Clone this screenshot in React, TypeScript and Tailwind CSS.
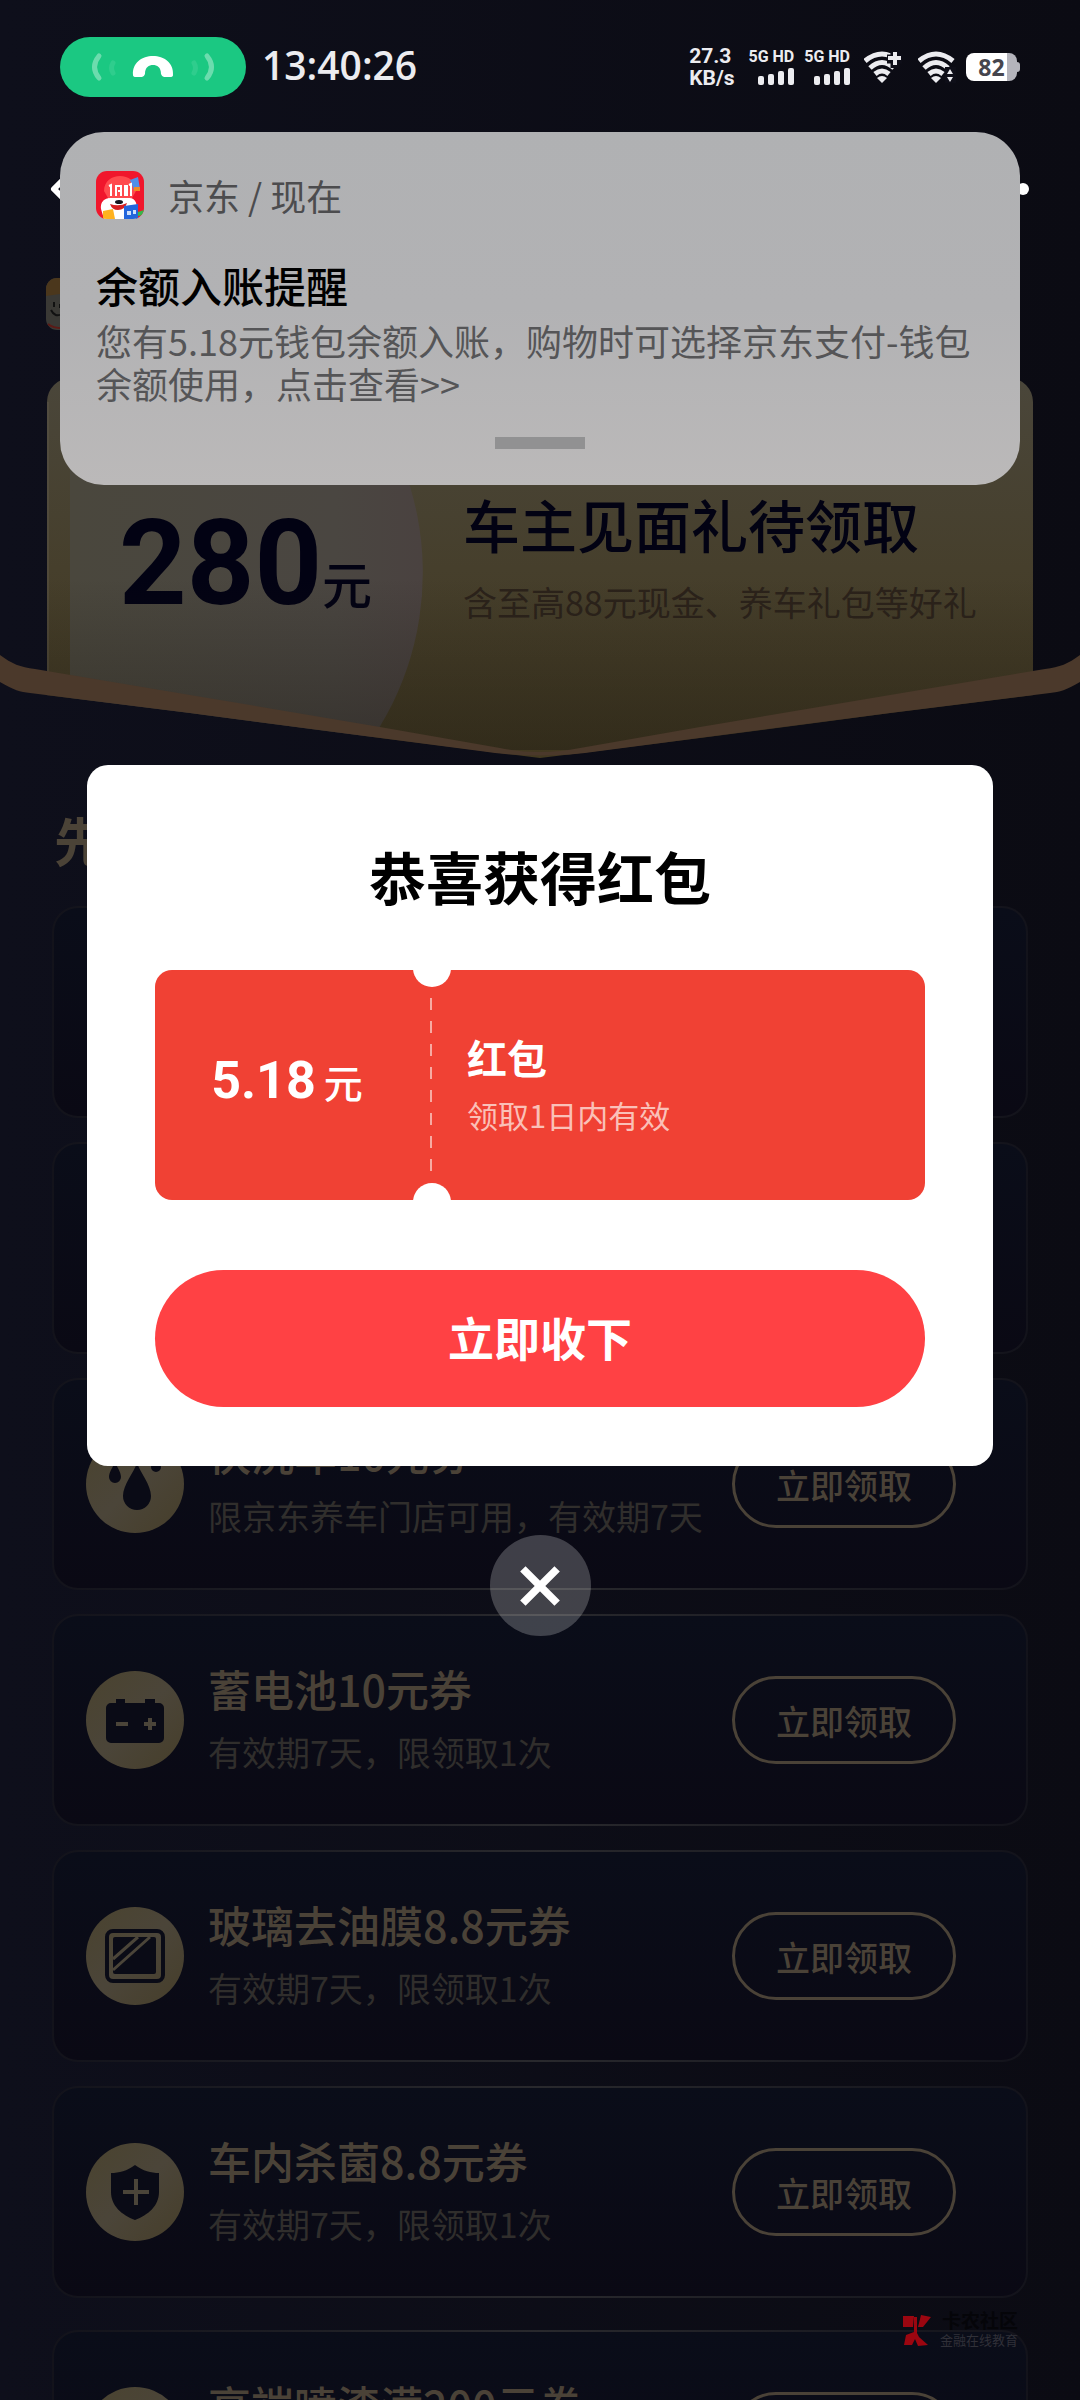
import type { ReactNode } from 'react'
import { ChevronLeft } from 'lucide-react'

type IconName = 'drops' | 'battery' | 'glass' | 'shield' | 'none'

type Coupon = {
  title: string
  note: string
  icon: IconName
}

const COUPONS: Coupon[] = [
  {
    title: '快洗车10元券',
    note: '限京东养车门店可用，有效期7天',
    icon: 'drops',
  },
  { title: '蓄电池10元券', note: '有效期7天，限领取1次', icon: 'battery' },
  { title: '玻璃去油膜8.8元券', note: '有效期7天，限领取1次', icon: 'glass' },
  { title: '车内杀菌8.8元券', note: '有效期7天，限领取1次', icon: 'shield' },
]

const MORE_COUPONS: Coupon[] = [
  { title: '高端喷漆满200元券', note: '有效期7天，限领取1次', icon: 'none' },
]

function CouponIcon({ name }: { name: IconName }) {
  return (
    <svg
      viewBox="0 0 98 98"
      className="h-[98px] w-[98px] shrink-0"
      aria-hidden="true"
    >
      <defs>
        <linearGradient id="gold" x1="0" y1="0" x2="1" y2="1">
          <stop offset="0" stopColor="#4a432f" />
          <stop offset="0.5" stopColor="#4b4539" />
          <stop offset="1" stopColor="#463e2a" />
        </linearGradient>
      </defs>
      <circle cx="49" cy="49" r="49" fill="url(#gold)" />
      {name === 'drops' && (
        <g fill="#0a0b16">
          <path d="M51 28C54 37 65 50 65 61A14 14 0 0 1 37 61C37 50 48 37 51 28Z" />
          <path d="M29 27C31 32 35 37 35 42A6 6 0 0 1 23 42C23 37 27 32 29 27Z" />
          <path d="M70 20C72 24 75 28 75 32A5 5 0 0 1 65 32C65 28 68 24 70 20Z" />
        </g>
      )}
      {name === 'battery' && (
        <>
          <path
            d="M30 28h9v4h20v-4h10v4h4a5 5 0 0 1 5 5v30a5 5 0 0 1-5 5H25a5 5 0 0 1-5-5V37a5 5 0 0 1 5-5h5z"
            fill="#0a0b16"
          />
          <path
            d="M30 53h12M58 53h12M64 47v12"
            stroke="#4b4539"
            strokeWidth="4"
          />
        </>
      )}
      {name === 'glass' && (
        <>
          <rect
            x="21"
            y="24"
            width="56"
            height="50"
            rx="6"
            fill="none"
            stroke="#0a0b16"
            strokeWidth="4"
          />
          <rect x="27" y="30" width="43" height="37" rx="2" fill="#0a0b16" />
          <path
            d="M27 52 52 30M27 63 64 30"
            stroke="#4b4539"
            strokeWidth="3"
          />
        </>
      )}
      {name === 'shield' && (
        <>
          <path
            d="M49 22C57 28 65 30 73 30V49C73 63 62 72 49 77C36 72 25 63 25 49V30C33 30 41 28 49 22Z"
            fill="#0a0b16"
          />
          <path
            d="M37 49h26M50 36v26"
            stroke="#4b4539"
            strokeWidth="4"
          />
        </>
      )}
    </svg>
  )
}

function CardFrame({ children }: { children?: ReactNode }) {
  return (
    <div className="h-[212px] rounded-[26px] bg-linear-to-r from-[#13131b] via-[#29292d] to-[#13131b] p-[2px]">
      <div className="flex h-full items-center rounded-[24px] bg-linear-to-b from-[#0a0d19] to-[#0a0914] pr-[70px] pl-8">
        {children}
      </div>
    </div>
  )
}

function CouponCard({ coupon }: { coupon: Coupon }) {
  return (
    <CardFrame>
      <CouponIcon name={coupon.icon} />
      <div className="ml-6 flex-1 whitespace-nowrap">
        <h3 className="text-[43px] leading-[64px] font-medium text-[#4a4237]">
          {coupon.title}
        </h3>
        <p className="text-[34px] leading-[64px] text-[#302e2c]">
          {coupon.note}
        </p>
      </div>
      <button
        type="button"
        className="h-[88px] w-[224px] shrink-0 rounded-full border-3 border-[#4a4237] text-[34px] font-medium text-[#4a4237]"
      >
        立即领取
      </button>
    </CardFrame>
  )
}

function Hero() {
  return (
    <section className="relative h-[380px]">
      <div className="relative mx-[47px] flex h-full overflow-hidden rounded-t-[24px] bg-linear-to-b from-[#4a463a] via-[#463f2c] to-[#423920] pt-[102px]">
        <svg
          viewBox="0 0 400 380"
          className="absolute top-0 left-0 h-[380px] w-[400px]"
          aria-hidden="true"
        >
          <defs>
            <linearGradient id="silver" x1="0" y1="0" x2="1" y2="0">
              <stop offset="0" stopColor="#4a473d" />
              <stop offset="0.75" stopColor="#4a4641" />
              <stop offset="1" stopColor="#4a4240" />
            </linearGradient>
          </defs>
          <path
            d="M23 0H303A297 297 0 0 1 311 380H23Z"
            fill="url(#silver)"
          />
          <path d="M1 24V380" stroke="#5a5548" strokeWidth="1" />
        </svg>
        <p className="relative flex w-[416px] shrink-0 items-baseline pl-[72px] text-[#020213]">
          <span className="font-['Roboto',sans-serif] text-[118px] leading-[168px] font-bold">
            280
          </span>
          <span className="text-[50px] font-medium">元</span>
        </p>
        <div className="relative whitespace-nowrap">
          <h1 className="text-[57px] leading-[86px] font-medium text-[#020213]">
            车主见面礼待领取
          </h1>
          <p className="text-[34px] leading-[72px] text-[#2b221a]">
            含至高88元现金、养车礼包等好礼
          </p>
        </div>
      </div>
      <svg
        viewBox="0 0 1080 180"
        preserveAspectRatio="none"
        className="absolute bottom-0 left-0 h-[180px] w-full"
        aria-hidden="true"
      >
        <defs>
          <linearGradient id="shade" x1="0" y1="0" x2="0" y2="1">
            <stop offset="0" stopColor="#1a1712" stopOpacity="0" />
            <stop offset="1" stopColor="#1a1712" stopOpacity="0.4" />
          </linearGradient>
          <linearGradient id="ground" x1="0" y1="0" x2="1" y2="0">
            <stop offset="0" stopColor="#0e0f1b" />
            <stop offset="1" stopColor="#0b0b13" />
          </linearGradient>
        </defs>
        <rect x="47" y="0" width="986" height="172" fill="url(#shade)" />
        <path
          d="M0 104C14 112 20 114 30 115L190 135Q360 158 540 180Q720 158 890 135L1050 115C1060 114 1066 112 1080 104V180H0Z"
          fill="url(#ground)"
        />
        <path
          d="M0 77C12 86 20 89 35 91L190 117L380 149L500 170Q540 178 580 170L700 149L890 117L1045 91C1060 89 1068 86 1080 77V104C1066 112 1060 114 1050 115L890 135L600 173Q540 182 480 173L190 135L30 115C20 114 14 112 0 104Z"
          fill="#4b392b"
        />
      </svg>
    </section>
  )
}

function Page() {
  return (
    <main>
      <nav className="mt-[134px] flex h-[110px] items-center justify-between pr-[51px] pl-9">
        <a href="#back" aria-label="返回">
          <ChevronLeft className="h-12 w-12 text-white" strokeWidth={3} />
        </a>
        <a href="#more" aria-label="更多" className="flex gap-2">
          <span className="h-3 w-3 rounded-full bg-white" />
          <span className="h-3 w-3 rounded-full bg-white" />
          <span className="h-3 w-3 rounded-full bg-white" />
        </a>
      </nav>
      <div className="h-[134px] pt-[34px] pl-[46px]">
        <svg viewBox="0 0 52 52" className="h-[52px] w-[52px]" aria-hidden="true">
          <rect width="52" height="52" rx="11" fill="#3a3935" />
          <path d="M0 18V11A11 11 0 0 1 11 0H30L14 16Z" fill="#4b371c" />
          <path
            d="M5 32Q9 40 16 36M8 24V29M14 26V30"
            fill="none"
            stroke="#111"
            strokeWidth="2"
          />
          <path d="M2 46Q8 51 20 50" stroke="#5c1a16" strokeWidth="2" fill="none" />
        </svg>
      </div>
      <Hero />
      <h2 className="mt-[50px] px-[54px] text-[52px] leading-[64px] font-bold text-[#4b4337]">
        先
      </h2>
      <div className="mt-[34px] flex flex-col gap-6 px-[52px]">
        <CardFrame />
        <CardFrame />
        {COUPONS.map((coupon) => (
          <CouponCard key={coupon.title} coupon={coupon} />
        ))}
      </div>
      <div className="mt-8 px-[52px]">
        {MORE_COUPONS.map((coupon) => (
          <CouponCard key={coupon.title} coupon={coupon} />
        ))}
      </div>
    </main>
  )
}

function Signal() {
  return (
    <div className="flex flex-col items-end gap-1">
      <span className="font-['Roboto',sans-serif] text-[16px] leading-[14px] font-bold">
        5G HD
      </span>
      <svg viewBox="0 0 36 17" className="h-[17px] w-9" aria-hidden="true">
        <rect x="0" y="8" width="6" height="9" rx="2" fill="currentColor" />
        <rect x="10" y="6" width="6" height="11" rx="2" fill="currentColor" />
        <rect x="20" y="3" width="6" height="14" rx="2" fill="currentColor" />
        <rect x="30" y="0" width="6" height="17" rx="2" fill="currentColor" />
      </svg>
    </div>
  )
}

function Wifi({ children }: { children: ReactNode }) {
  return (
    <svg viewBox="0 0 38 32" className="h-8 w-[38px]" aria-hidden="true">
      <g fill="none" stroke="currentColor" strokeWidth="5">
        <path d="M1 10Q18 -4 35 10" />
        <path d="M6 17Q18 6 30 17" />
        <path d="M11 23Q18 17 25 23" />
      </g>
      <path d="M13 27Q18 23 23 27L18 32Z" fill="currentColor" />
      {children}
    </svg>
  )
}

function StatusBar() {
  return (
    <header className="flex h-[132px] items-center justify-between px-[60px] pt-[2px] text-[#ececf0]">
      <div className="flex items-center gap-4">
        <svg
          viewBox="0 0 186 60"
          className="h-[60px] w-[186px]"
          aria-label="通话中"
        >
          <rect width="186" height="60" rx="30" fill="#1bc882" />
          <path
            d="M73 38C72 26 82 19 93 19S114 26 113 38Q113 40 110 40H104Q102 40 101 37C101 30 97 28 93 28S85 30 85 37Q84 40 82 40H76Q73 40 73 38Z"
            fill="#fff"
          />
          <g fill="none" strokeWidth="5" strokeLinecap="round">
            <path d="M39 19Q30 30 39 41M147 19Q156 30 147 41" stroke="#6cdcae" />
            <path d="M53 26Q50 31 53 36M134 26Q137 31 134 36" stroke="#2fcd8d" />
          </g>
        </svg>
        <time className="pb-1 font-['Open_Sans',sans-serif] text-[39px] leading-[56px] font-semibold">
          13:40:26
        </time>
      </div>
      <div className="flex items-center gap-[10px]">
        <div className="mr-1 flex flex-col font-['Roboto',sans-serif] text-[21px] leading-[22px] font-bold">
          <span>27.3</span>
          <span>KB/s</span>
        </div>
        <Signal />
        <Signal />
        <div className="flex gap-4 pl-1">
          <Wifi>
            <path d="M31 1V17M23 8H38" stroke="#0e0e18" strokeWidth="9" />
            <path d="M31 1V14M24 7H37" stroke="currentColor" strokeWidth="4" />
          </Wifi>
          <Wifi>
            <path d="M27 32V16H38V32Z" fill="#0e0e18" />
            <path
              d="M29 23L32 18L35 23ZM29 26L32 31L35 26Z"
              fill="currentColor"
            />
          </Wifi>
        </div>
        <div className="flex items-center">
          <div className="flex h-7 w-[51px] items-center justify-center rounded-[8px] bg-linear-to-r from-white from-80% to-[#b4b4bc] to-80% font-['Open_Sans',sans-serif] text-[23px] font-bold text-[#45454d]">
            82
          </div>
          <span className="h-[10px] w-[3px] rounded-r-sm bg-[#b4b4bc]" />
        </div>
      </div>
    </header>
  )
}

function AppLogo() {
  return (
    <svg viewBox="0 0 48 48" className="h-12 w-12" aria-hidden="true">
      <clipPath id="logo">
        <rect width="48" height="48" rx="11" />
      </clipPath>
      <g clipPath="url(#logo)">
        <rect width="48" height="48" fill="#f0162c" />
        <path d="M8 20C8 0 40 0 40 20L36 27H12Z" fill="#ff4a4e" />
        <path d="M34 9L42 6L44 18L38 19Z" fill="#4f8fe8" />
        <path d="M38 16h6v4h-6z" fill="#f08a24" />
        <path d="M5 38C4 28 12 27 15 27H32C40 26 42 34 40 40V48H8Z" fill="#fff" />
        <path
          d="M13 15L15 14V25M20 25V15H25V25M22 20H24M29 25V15H31V25M33 14L35 13V25"
          fill="none"
          stroke="#fff"
          strokeWidth="2"
        />
        <ellipse cx="23" cy="31" rx="4" ry="2" fill="#16161e" />
        <path d="M14 33Q23 36 31 32Q29 39 22 39Q16 39 14 33Z" fill="#d62020" />
        <path d="M7 40L17 38L19 48H7Z" fill="#ffb21e" />
        <path d="M28 35L42 33V48H28Z" fill="#2366dc" />
        <path d="M31 40h4v4h-4zM37 39h3v4h-3z" fill="#cfe0fa" />
        <path d="M42 41L48 39V44L42 45Z" fill="#35b84a" />
      </g>
    </svg>
  )
}

function Notification() {
  return (
    <article className="mx-[60px] flex h-[353px] flex-col rounded-[44px] bg-linear-to-b from-[#b0b1b3] via-[#b2b2b4] to-[#bbb9b9] px-9">
      <div className="mt-[39px] flex items-center gap-6">
        <AppLogo />
        <span className="text-[36px] leading-12 text-[#4c4c4e]">
          京东 / 现在
        </span>
      </div>
      <h2 className="mt-[38px] text-[42px] leading-[56px] font-medium text-black">
        余额入账提醒
      </h2>
      <p className="mt-[6px] text-[36px] leading-[43px] text-[#555557]">
        您有5.18元钱包余额入账，购物时可选择京东支付-钱包余额使用，点击查看&gt;&gt;
      </p>
      <div className="mt-8 h-3 w-[90px] self-center bg-[#919192]" />
    </article>
  )
}

function RedPacketDialog() {
  return (
    <section
      role="dialog"
      aria-label="恭喜获得红包"
      className="mx-[87px] rounded-[21px] bg-white px-[68px] pt-[70px] pb-[59px]"
    >
      <h2 className="text-center text-[57px] leading-[80px] font-bold text-black">
        恭喜获得红包
      </h2>
      <div className="relative mt-[55px] flex h-[230px] items-center overflow-hidden rounded-[17px] bg-[#f04134] text-white">
        <div className="flex w-[276px] items-center justify-center gap-2 pr-3 pb-2">
          <span className="font-['Roboto',sans-serif] text-[52px] leading-[60px] font-bold">
            5.18
          </span>
          <span className="text-[39px] leading-[60px] font-medium">元</span>
        </div>
        <div className="ml-9">
          <p className="text-[40px] leading-[60px] font-bold">红包</p>
          <p className="text-[31px] leading-[56px] text-[#fac0b8]">
            领取1日内有效
          </p>
        </div>
        <svg
          viewBox="0 0 38 230"
          className="absolute top-0 left-[258px] h-[230px] w-[38px]"
          aria-hidden="true"
        >
          <circle cx="19" cy="-2" r="19" fill="#fff" />
          <circle cx="19" cy="232" r="19" fill="#fff" />
          <path
            d="M18 28V202"
            stroke="#f7aaa2"
            strokeWidth="2"
            strokeDasharray="12 11"
          />
        </svg>
      </div>
      <button
        type="button"
        className="mt-[70px] h-[137px] w-full rounded-full bg-[#ff4144] pb-1 text-[46px] font-bold text-white"
      >
        立即收下
      </button>
    </section>
  )
}

function Watermark() {
  return (
    <div className="absolute right-[62px] bottom-[50px] flex items-center gap-2">
      <svg viewBox="0 0 32 34" className="h-[34px] w-8" aria-hidden="true">
        <path
          d="M3 3H14L13 14H3ZM18 14L21 2L31 4L23 14ZM4 32L6 22L14 19V4H17V20L19 24L28 32L18 33L15 26L12 32Z"
          fill="#9c0610"
        />
      </svg>
      <div className="flex flex-col items-end">
        <span className="text-[19px] leading-5 font-bold text-[#050509]">
          卡农社区
        </span>
        <span className="text-[13px] leading-5 text-[#303038]">
          金融在线教育
        </span>
      </div>
    </div>
  )
}

export default function App() {
  return (
    <div className="relative h-screen overflow-hidden bg-linear-to-r from-[#0e0f1b] to-[#0b0b13] font-['Noto_Sans_CJK_SC',sans-serif]">
      <Page />
      <div className="absolute inset-0 flex flex-col">
        <StatusBar />
        <Notification />
        <div className="mt-[280px]">
          <RedPacketDialog />
        </div>
        <button
          type="button"
          aria-label="关闭"
          className="mt-[69px] flex h-[101px] w-[101px] items-center justify-center self-center rounded-full bg-white/22"
        >
          <svg viewBox="0 0 42 42" className="h-10 w-10">
            <path d="M3 3L39 39M39 3L3 39" stroke="#fff" strokeWidth="8" />
          </svg>
        </button>
      </div>
      <Watermark />
    </div>
  )
}
